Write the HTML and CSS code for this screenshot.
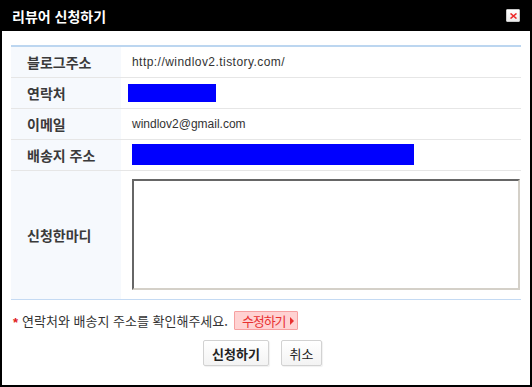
FILE: index.html
```html
<!DOCTYPE html>
<html lang="ko">
<head>
<meta charset="utf-8">
<title>리뷰어 신청하기</title>
<link rel="stylesheet" href="styles.css">
</head>
<body>
<div class="window">
  <div class="titlebar">
    <span class="title">리뷰어 신청하기</span>
    <span class="close" aria-label="닫기">
      <svg width="7" height="6" viewBox="0 0 7 6"><path d="M0.5 0.5 L6.5 5.5 M6.5 0.5 L0.5 5.5" stroke="#ee2a2a" stroke-width="1.6" fill="none"/></svg>
    </span>
  </div>
  <div class="content">
    <div class="form">
      <div class="row">
        <div class="label">블로그주소</div>
        <div class="value url">http://windlov2.tistory.com/</div>
      </div>
      <div class="row">
        <div class="label">연락처</div>
        <div class="value"><span class="redact redact-phone"></span></div>
      </div>
      <div class="row">
        <div class="label">이메일</div>
        <div class="value">windlov2@gmail.com</div>
      </div>
      <div class="row">
        <div class="label">배송지 주소</div>
        <div class="value"><span class="redact redact-addr"></span></div>
      </div>
      <div class="row row-tall">
        <div class="label">신청한마디</div>
        <div class="value value-tall"><textarea class="memo"></textarea></div>
      </div>
    </div>
    <div class="note">
      <span class="star">*</span>
      <span class="note-text">연락처와 배송지 주소를 확인해주세요.</span>
      <span class="edit-btn"><span class="edit-label">수정하기</span><span class="tri"></span></span>
    </div>
    <div class="actions">
      <button class="btn btn-primary">신청하기</button>
      <button class="btn btn-cancel">취소</button>
    </div>
  </div>
</div>
</body>
</html>
```
FILE: styles.css
```css
html, body {
  margin: 0;
  padding: 0;
  background: #fff;
}
body {
  font-family: "Noto Sans CJK KR", "Liberation Sans", sans-serif;
  color: #333;
}
.window {
  width: 532px;
  height: 387px;
  box-sizing: border-box;
  border: 2px solid #000;
  border-top: 0;
  background: #fff;
  display: flex;
  flex-direction: column;
}
.titlebar {
  height: 31px;
  flex: none;
  background: #000;
  display: flex;
  align-items: center;
  justify-content: space-between;
  padding: 0 10px 0 10px;
}
.title {
  color: #fff;
  font-weight: bold;
  font-size: 14px;
  line-height: 14px;
  margin-top: 1px;
}
.close {
  width: 12px;
  height: 11px;
  border: 1px solid #c8c8c8;
  background: linear-gradient(#ffffff, #ececec);
  display: flex;
  align-items: center;
  justify-content: center;
  border-radius: 1px;
}
.content {
  padding: 14px 9px 0 9px;
}
.form {
  border-top: 2px solid #bcd6f0;
  border-bottom: 1px solid #c4daf3;
}
.row {
  display: grid;
  grid-template-columns: 110px 1fr;
  height: 30px;
  border-bottom: 1px solid #e6e6e6;
}
.row-tall {
  height: 128px;
  border-bottom: 0;
}
.label {
  background: #f6f9fd;
  display: flex;
  align-items: center;
  padding-left: 16px;
  font-size: 14px;
  font-weight: bold;
  color: #3a3a3a;
  white-space: nowrap;
}
.value {
  display: flex;
  align-items: center;
  padding-left: 11px;
  font-family: "Liberation Sans", sans-serif;
  font-size: 12px;
  color: #333;
}
.url {
  letter-spacing: 0.45px;
}
.value-tall {
  align-items: flex-start;
  padding-top: 8px;
  padding-right: 1px;
}
.redact {
  display: block;
  background: #0000ff;
}
.redact-phone {
  width: 88px;
  height: 18px;
  margin-left: -4px;
  margin-top: -1px;
}
.redact-addr {
  width: 282px;
  height: 21px;
  margin-top: -1px;
}
.memo {
  display: block;
  width: 388px;
  height: 111px;
  box-sizing: border-box;
  margin: 0;
  resize: none;
  border: 2px solid;
  border-color: #666 #d4d0c8 #d4d0c8 #666;
  background: #fff;
  padding: 0;
}
.note {
  display: flex;
  align-items: center;
  margin-top: 11px;
  padding-left: 2px;
  height: 19px;
  white-space: nowrap;
}
.star {
  color: #e02020;
  font-family: "Liberation Sans", sans-serif;
  font-size: 13px;
  font-weight: bold;
  width: 9px;
  line-height: 19px;
  padding-top: 3px;
}
.note-text {
  font-size: 13px;
  color: #333;
}
.edit-btn {
  margin-left: 6px;
  height: 19px;
  box-sizing: border-box;
  width: 64px;
  border: 1px solid #f6a0a0;
  background: #ffd2d2;
  color: #e83030;
  display: flex;
  align-items: center;
  padding-left: 7px;
  border-radius: 1px;
}
.edit-label {
  font-size: 13px;
  letter-spacing: -1.1px;
}
.tri {
  width: 0;
  height: 0;
  border-left: 4px solid #e83030;
  border-top: 4px solid transparent;
  border-bottom: 4px solid transparent;
  margin-left: 5px;
}
.actions {
  display: flex;
  justify-content: center;
  gap: 12px;
  margin-top: 10px;
  padding-right: 7px;
}
.btn {
  height: 26px;
  box-sizing: border-box;
  border: 1px solid #d2d2d2;
  border-radius: 2px;
  background: linear-gradient(#ffffff, #f3f3f3);
  box-shadow: 1px 1px 1px rgba(0,0,0,0.06);
  font-family: "Noto Sans CJK KR", sans-serif;
  font-size: 13px;
  color: #222;
  padding: 0;
  margin: 0;
  white-space: nowrap;
  display: flex;
  align-items: center;
  justify-content: center;
}
.btn-primary {
  font-weight: bold;
  width: 66px;
}
.btn-cancel {
  width: 41px;
}
```
